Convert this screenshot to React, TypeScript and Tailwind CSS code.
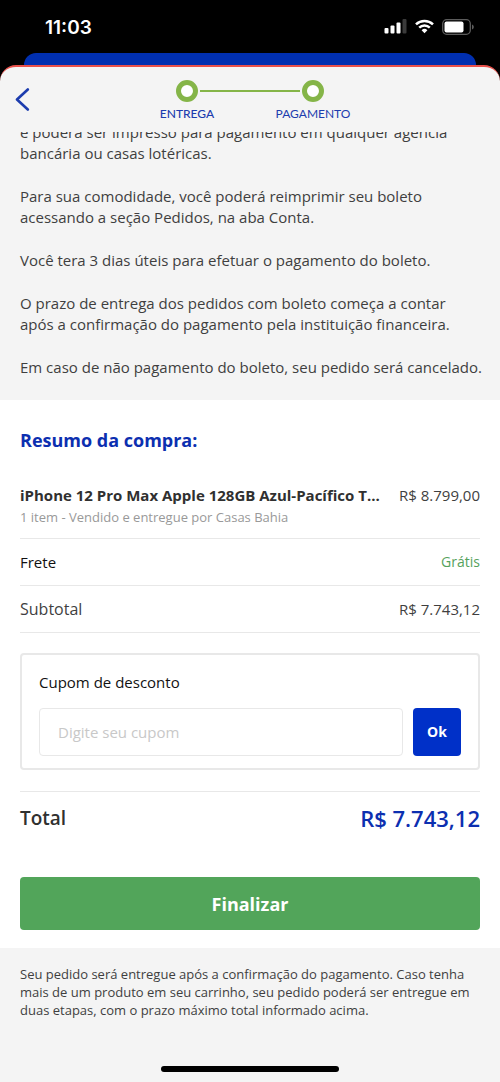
import type { ReactNode } from "react";

function StatusBar() {
  return (
    <div className="flex h-[53px] items-center justify-between pl-[45px] pr-[26px]">
      <span className="pt-1 font-['Inter'] text-[19px] font-semibold text-white">11:03</span>
      <div className="flex items-center gap-2 text-white">
        <svg width="23" height="15" viewBox="0 0 23 15" fill="currentColor" aria-hidden="true">
          <rect x="0.500" y="9" width="4" height="5.5" rx="1" />
          <rect x="6.500" y="6.5" width="4" height="8" rx="1" />
          <rect x="12.500" y="3.5" width="4" height="11" rx="1" />
          <rect x="18.500" y="0" width="4" height="14.5" rx="1" fill="#3a3a3a" />
        </svg>
        <svg width="19" height="15" viewBox="0 0 19 15" fill="none" stroke="currentColor" strokeWidth="2.5" aria-hidden="true">
          <path d="M1 5.300a12.300 12.300 0 0 1 17 0" />
          <path d="M4.200 8.700a7.600 7.600 0 0 1 10.600 0" />
          <path d="M6.600 11.200a4.200 4.200 0 0 1 5.800 0L9.500 14.300z" fill="currentColor" stroke="none" />
        </svg>
        <svg width="32" height="16" viewBox="0 0 32 16" aria-hidden="true">
          <rect x="0.700" y="0.700" width="27.600" height="14.600" rx="4" fill="none" stroke="#5c5c5c" strokeWidth="1.300" />
          <rect x="2.500" y="2.500" width="19" height="11" rx="2" fill="#fff" />
          <path d="M30 5.500c1.300.5 1.800 1.400 1.800 2.500s-.5 2-1.800 2.500z" fill="#5c5c5c" />
        </svg>
      </div>
    </div>
  );
}

function StepDot() {
  return <span className="size-[22px] rounded-full border-[5px] border-[#85b548] bg-white" />;
}

function Header() {
  return (
    <header className="grid h-[65px] grid-cols-[1fr_auto_1fr] items-center">
      <button type="button" aria-label="Voltar" className="ml-[15px] w-fit">
        <svg width="15" height="24" viewBox="0 0 15 24" fill="none" stroke="#1c3cae" strokeWidth="2.600" strokeLinecap="round" strokeLinejoin="round" aria-hidden="true">
          <path d="M12.800 1.500L2 11.500l10.800 10" />
        </svg>
      </button>
      <div className="flex flex-col items-center gap-1 pt-0.5">
        <div className="flex items-center gap-0.5">
          <StepDot />
          <span className="h-0.5 w-[100px] bg-[#85b548]" />
          <StepDot />
        </div>
        <ol className="grid w-[252px] grid-cols-2 text-center font-['Lato'] text-xs leading-4 text-[#1c3cae]">
          <li className="font-medium">ENTREGA</li>
          <li>PAGAMENTO</li>
        </ol>
      </div>
    </header>
  );
}

function Row({ children }: { children: ReactNode }) {
  return <div className="flex h-[47px] items-center justify-between border-b border-[#e8e8e8] text-[15px]">{children}</div>;
}

export default function App() {
  return (
    <div className="flex min-h-screen flex-col bg-black font-['Open_Sans','Noto_Sans',sans-serif] text-[#3f3f3f]">
      <StatusBar />
      <div className="mx-6 h-3 rounded-t-xl bg-[#002fb0]" />
      <div className="flex grow flex-col rounded-t-2xl border-t-2 border-[#e8504a] bg-[#f4f4f4]">
        <Header />
        <main className="flex grow flex-col">
          <section className="overflow-hidden px-5 pb-[22px]">
            <div className="-mt-2.5 flex flex-col gap-[22px] text-[15px] leading-[21px]">
              <p>
                e poderá ser impresso para pagamento em qualquer agência
                <br />
                bancária ou casas lotéricas.
              </p>
              <p>
                Para sua comodidade, você poderá reimprimir seu boleto
                <br />
                acessando a seção Pedidos, na aba Conta.
              </p>
              <p>Você tera 3 dias úteis para efetuar o pagamento do boleto.</p>
              <p>
                O prazo de entrega dos pedidos com boleto começa a contar
                <br />
                após a confirmação do pagamento pela instituição financeira.
              </p>
              <p className="whitespace-nowrap">Em caso de não pagamento do boleto, seu pedido será cancelado.</p>
            </div>
          </section>

          <section className="bg-white px-5 pb-[18px] pt-6">
            <h2 className="text-lg font-bold leading-8 text-[#0c2fb0]">Resumo da compra:</h2>
            <div className="mt-[27px] border-b border-[#e8e8e8] pb-[11px]">
              <div className="flex items-center justify-between gap-3 text-[15px] leading-6">
                <h3 className="min-w-0 truncate font-bold text-[#303030]">iPhone 12 Pro Max Apple 128GB Azul-Pacífico T...</h3>
                <span className="shrink-0">R$ 8.799,00</span>
              </div>
              <p className="text-[13px] leading-5 text-[#999]">1 item - Vendido e entregue por Casas Bahia</p>
            </div>
            <Row>
              <span className="text-[#111]">Frete</span>
              <span className="text-sm text-[#55a25c]">Grátis</span>
            </Row>
            <Row>
              <span className="text-base">Subtotal</span>
              <span>R$ 7.743,12</span>
            </Row>

            <form className="mt-5 rounded-sm border-2 border-[#e8e8e8] px-[17px] pb-3 pt-[15px]" onSubmit={(e) => e.preventDefault()}>
              <label htmlFor="cupom" className="block text-[15px] leading-6 text-[#111]">
                Cupom de desconto
              </label>
              <div className="mt-3.5 flex gap-2.5">
                <input
                  id="cupom"
                  type="text"
                  placeholder="Digite seu cupom"
                  className="h-12 min-w-0 grow rounded-sm border border-[#e8e8e8] px-[18px] text-[15px] outline-none placeholder:text-[#c8c8c8]"
                />
                <button type="submit" className="size-12 rounded-sm bg-[#0030c8] text-sm font-bold text-white">
                  Ok
                </button>
              </div>
            </form>

            <div className="mt-[21px] flex items-center justify-between border-t border-[#e8e8e8] pt-2.5 font-semibold leading-8">
              <span className="text-[19px] text-[#303030]">Total</span>
              <span className="text-[22px] text-[#0c2fb0]">R$ 7.743,12</span>
            </div>

            <button type="button" className="mt-[43px] h-[53px] w-full rounded bg-[#52a55a] text-lg font-bold text-white">
              Finalizar
            </button>
          </section>

          <footer className="flex grow flex-col justify-between px-5 pb-2.5 pt-[17px]">
            <p className="text-[13px] leading-[18px]">
              Seu pedido será entregue após a confirmação do pagamento. Caso tenha
              <br />
              mais de um produto em seu carrinho, seu pedido poderá ser entregue em
              <br />
              duas etapas, com o prazo máximo total informado acima.
            </p>
            <div className="h-1.5 w-[178px] self-center rounded-full bg-black" />
          </footer>
        </main>
      </div>
    </div>
  );
}
